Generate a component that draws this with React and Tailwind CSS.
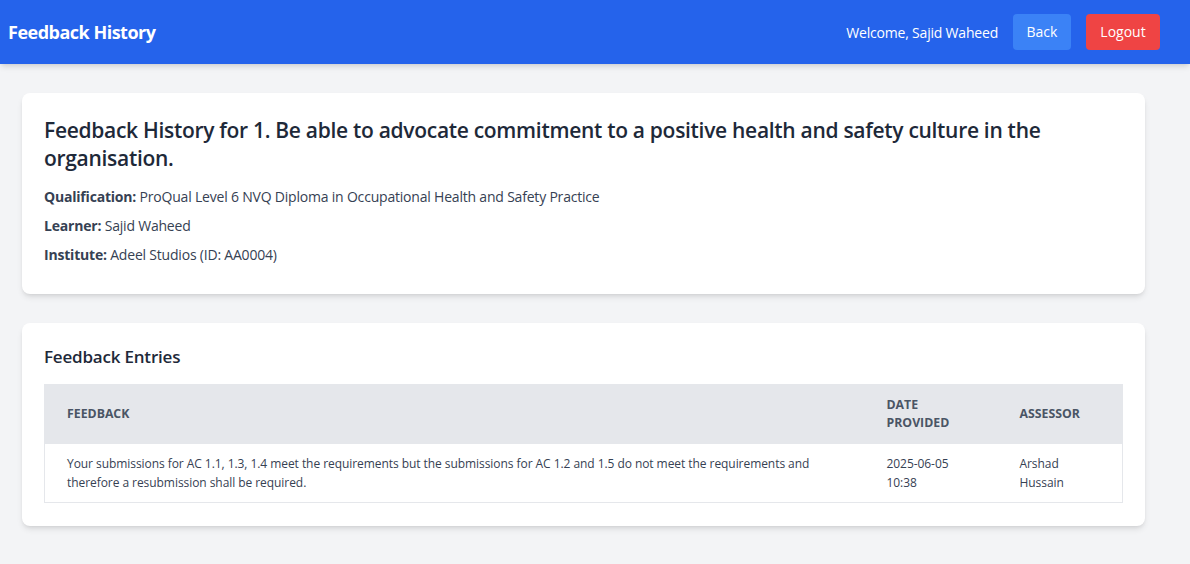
export default function App() {
  const font = { fontFamily: '"Open Sans", "Noto Sans", sans-serif' };
  return (
    <div className="min-h-[564px] bg-gray-100" style={font}>
      <header className="h-16 bg-[#2563eb] shadow-md flex items-center justify-between pl-2 pr-[30px]">
        <h1 className="text-white text-[18px] font-bold tracking-[-0.5px]">Feedback History</h1>
        <div className="flex items-center">
          <span className="text-white text-[14px] mr-[15px] tracking-[-0.2px]">Welcome, Sajid Waheed</span>
          <button className="h-9 w-[58px] rounded bg-[#3b82f6] text-white text-[14px] mr-[15px] pb-px">Back</button>
          <button className="h-9 w-[74px] rounded bg-[#ef4444] text-white text-[14px] pb-px">Logout</button>
        </div>
      </header>
      <main className="pl-[22px] pr-[45px] pt-[29px] pb-8 flex flex-col gap-[29px]">
        <section className="bg-white rounded-lg shadow-md px-[22px] pt-[23px] pb-[29px]">
          <h2 className="text-[21px] leading-[28px] font-semibold text-gray-800 tracking-[-0.3px]">
            Feedback History for 1. Be able to advocate commitment to a positive health and safety culture in the organisation.
          </h2>
          <div className="mt-[15px] flex flex-col gap-[9px] text-[14px] leading-[20px] text-gray-700 tracking-[-0.2px]">
            <p><span className="font-bold">Qualification:</span> ProQual Level 6 NVQ Diploma in Occupational Health and Safety Practice</p>
            <p><span className="font-bold">Learner:</span> Sajid Waheed</p>
            <p><span className="font-bold">Institute:</span> Adeel Studios (ID: AA0004)</p>
          </div>
        </section>
        <section className="bg-white rounded-lg shadow-md px-[22px] pt-[22px] pb-[23px]">
          <h3 className="text-[17px] leading-[24px] font-semibold text-gray-800 tracking-[-0.2px] mb-[15px]">Feedback Entries</h3>
          <table className="w-full border border-gray-200 border-collapse table-fixed">
            <thead>
              <tr className="bg-gray-200 h-[59px]">
                <th className="text-left px-[22px] text-[12.3px] leading-[18px] font-bold text-gray-600 uppercase">Feedback</th>
                <th className="text-left px-[22px] w-[133px] text-[12.3px] leading-[18px] font-bold text-gray-600 uppercase">Date Provided</th>
                <th className="text-left px-[22px] w-[125px] text-[12.3px] leading-[18px] font-bold text-gray-600 uppercase">Assessor</th>
              </tr>
            </thead>
            <tbody>
              <tr className="h-[59px] text-[12px] leading-[19px] text-gray-700 tracking-[-0.06px]">
                <td className="px-[22px] align-middle">Your submissions for AC 1.1, 1.3, 1.4 meet the requirements but the submissions for AC 1.2 and 1.5 do not meet the requirements and therefore a resubmission shall be required.</td>
                <td className="px-[22px] align-middle">2025-06-05 10:38</td>
                <td className="px-[22px] align-middle">Arshad Hussain</td>
              </tr>
            </tbody>
          </table>
        </section>
      </main>
    </div>
  );
}
